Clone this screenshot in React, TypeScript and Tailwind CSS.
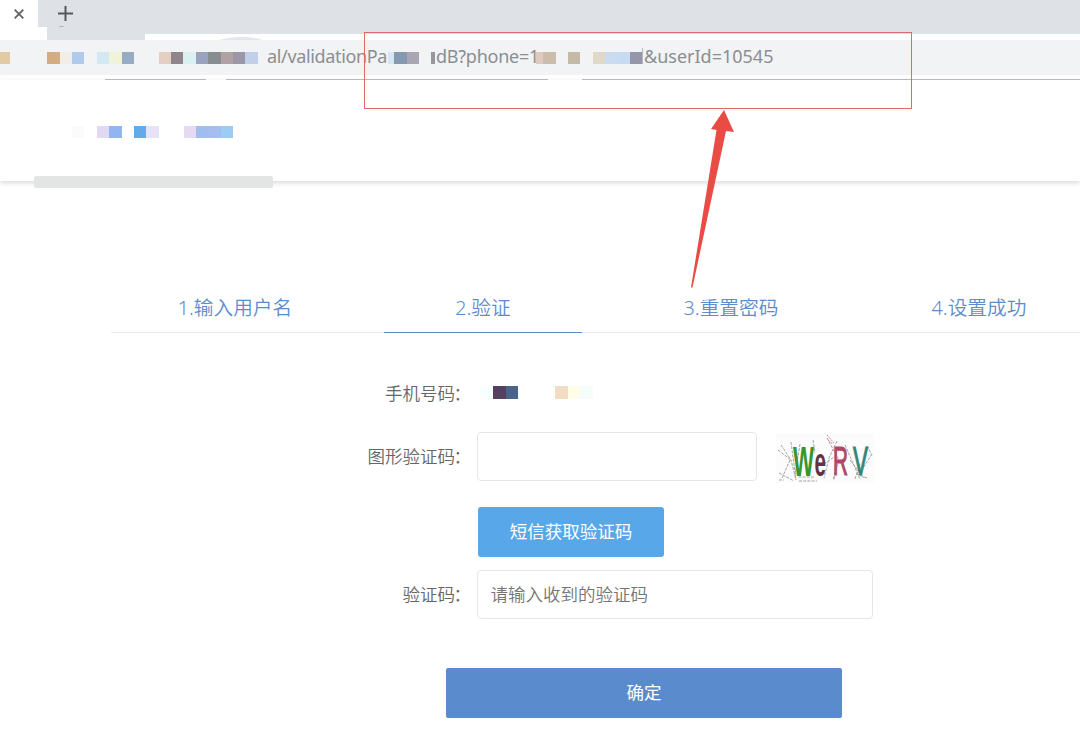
import React from "react";

type Cell = string | null;

function Mosaic({ cells }: { cells: Cell[] }) {
  return (
    <div className="flex h-[12.4px]">
      {cells.map((c, i) => (
        <span
          key={i}
          className="h-full w-[12.4px] shrink-0"
          style={{ backgroundColor: c ?? "transparent" }}
        />
      ))}
    </div>
  );
}

const addressCells: Cell[] = [
  "#e0cba6", null, null, null, "#d3ac82", "#f1ede8", "#b0cae9", null, "#d2e8f2", "#f0f2d9",
  "#98abc2", null, null, "#e4d0c2", "#90858a", "#daf0f1", "#99a3bd", "#878d91", "#b0a1a2",
  "#9c97a6", "#c1cfe9",
];

const brandCells: Cell[] = [
  "#fbfbfb", null, "#e1d8f2", "#92b5ef", null, "#62aae8", "#e7e3f7", null, null,
  "#e6daf2", "#a0bdee", "#a6bdf0", "#9ccbf5",
];

const steps = ["1.输入用户名", "2.验证", "3.重置密码", "4.设置成功"];

function TabStrip() {
  return (
    <div className="flex h-[34px] bg-[#dee1e6]">
      <div className="flex w-[38px] shrink-0 justify-center bg-white pt-[9px]">
        <svg width="10" height="10" viewBox="0 0 10 10" className="block">
          <path d="M.7.7 9.3 9.3M9.3.7.7 9.3" stroke="#626469" strokeWidth="1.9" />
        </svg>
      </div>
      <div className="flex h-full w-[9px] flex-col justify-end">
        <div className="h-[7px] bg-white" />
      </div>
      <div className="pt-[6px] pl-[11px]">
        <svg width="16" height="22" viewBox="0 0 16 22" className="block">
          <path d="M7.500 0v15M0 7.500h15" stroke="#55585d" strokeWidth="2" />
          <path d="M1.500 20.500h4" stroke="#aeb0b4" strokeWidth="1" />
        </svg>
      </div>
    </div>
  );
}

function AddressBar() {
  return (
    <div className="flex h-[46px] flex-col bg-white">
      <div className="flex h-[6px] shrink-0 pl-[47px]">
        <div className="h-full w-[98px] bg-[#dee1e6]" />
        <svg width="44" height="3" viewBox="0 0 44 3" className="mt-[3px] ml-[74px] block">
          <path d="M0 3Q22-3 44 3Z" fill="#e2e5e9" />
        </svg>
      </div>
      <div className="flex h-[35px] shrink-0 bg-[#f1f3f4] font-['Noto_Sans','Noto_Sans_CJK_SC',sans-serif] text-[18px] leading-[33px] whitespace-nowrap text-[#8b8e92]">
        <div className="-ml-[2.4px] w-[269.4px] shrink-0 pt-[12px]">
          <Mosaic cells={addressCells} />
        </div>
        <div className="w-[121px] shrink-0 tracking-[-0.35px]">al/validationPa</div>
        <div className="mt-[12px] h-[12px] w-[6.4px] shrink-0 bg-[#d6e6f2]" />
        <div className="w-[36.6px] shrink-0 pt-[12px]">
          <Mosaic cells={["#8799b0", "#aaa5b3"]} />
        </div>
        <div className="mt-[12px] h-[12px] w-[4px] shrink-0 bg-[#96989d]" />
        <div className="w-[101px] shrink-0 pl-px tracking-[-0.25px]">dB?phone=1</div>
        <div className="mt-[12px] h-[12.4px] w-[7.2px] shrink-0 bg-[#decabe]" />
        <div className="w-[98.8px] shrink-0 pt-[12px]">
          <Mosaic cells={["#cbbcab", null, "#c5baa8", null, "#e1d9c8", "#cbdcf1", "#c7dcf3", "#9696aa"]} />
        </div>
        <div className="mt-[8px] mr-px h-[16px] w-px shrink-0 bg-[#b4bac5]" />
        <div className="shrink-0">&amp;userId=10545</div>
      </div>
      <div className="flex h-[5px] shrink-0 items-end pl-[105px]">
        <div className="h-[1.5px] w-[101px] bg-[#b9b9bb]" />
        <div className="ml-[20px] h-[1.5px] w-[322px] bg-[#b9b9bb]" />
        <div className="ml-[34px] h-[1.5px] flex-1 bg-[#b9b9bb]" />
      </div>
    </div>
  );
}

function SiteHeader() {
  return (
    <div className="h-[101px] bg-white pt-[46px] pl-[72px] shadow-[0_2px_5px_rgba(0,0,0,0.15)]">
      <Mosaic cells={brandCells} />
      <div className="mt-[37.6px] -ml-[38px] h-[12px] w-[239px] rounded-[2px] bg-[#e3e4e4]" />
    </div>
  );
}

function Captcha() {
  return (
    <svg width="98" height="50" viewBox="0 0 98 50" className="mt-[3px] ml-[19px] block overflow-visible">
      <rect width="98" height="50" fill="#fcfcfc" />
      <g fill="none" stroke="#a5a5a5" strokeWidth="1" strokeDasharray="3 1.2">
        <path d="M2 17 15 27M5 12l10 15 5 20M15 9l5 38M14 27l-8 18M3 40l15 8M24 11l-5 31" />
        <path d="M37 7l2 13M38 44h-16M61 8l-8 17-5 20M51 5l12 22-6 20M69 12l15 34M91 45l-11-4M96 21l-9 14M79 46l5-15M91 13l5 9" />
        <path d="M61 14l-3 33M48 31l13-9M74 27l14 18M3 47h5M23 48h18" />
      </g>
      <path d="M51 2l7 8M52 7l5 4" stroke="#d48993" strokeWidth="1" strokeDasharray="2 1" />
      <g fontFamily="Liberation Sans" fontWeight="700">
        <text x="17" y="43" fontSize="42" textLength="21" lengthAdjust="spacingAndGlyphs" fill="#36952c">W</text>
        <text x="38.5" y="43" fontSize="41" textLength="11.5" lengthAdjust="spacingAndGlyphs" fill="#633244">e</text>
        <text x="57" y="42" fontSize="41" textLength="15" lengthAdjust="spacingAndGlyphs" fill="#ad4967" fontWeight="400" stroke="#ad4967" strokeWidth="1.2">R</text>
        <text x="77" y="42" fontSize="41" textLength="15" lengthAdjust="spacingAndGlyphs" fill="#338575" fontWeight="400" stroke="#338575" strokeWidth="1.2">V</text>
      </g>
    </svg>
  );
}

function Label({ children }: { children: string }) {
  return (
    <label className="w-[477px] shrink-0 pr-[6px] text-right text-[#666]">
      {children}
      <span className="-ml-[1.5px]">：</span>
    </label>
  );
}

export default function App() {
  return (
    <div className="relative h-[729px] w-[1080px] overflow-hidden bg-white font-['Noto_Sans_CJK_SC',sans-serif] text-[17.5px]">
      <TabStrip />
      <AddressBar />
      <SiteHeader />

      <nav className="mt-[101px] ml-[111px] flex h-[51px] w-[992px] border-b border-[#eaeaea] font-['Noto_Sans','Noto_Sans_CJK_SC',sans-serif] text-[19.7px] font-[350] text-[#5d8bcd]">
        {steps.map((step, i) => (
          <div key={step} className="flex w-[248px] justify-center">
            <div
              className={
                i === 1
                  ? "h-[51px] w-[198px] border-b border-[#6288ca] text-center leading-[52px]"
                  : "h-[51px] w-[198px] text-center leading-[52px]"
              }
            >
              {step}
            </div>
          </div>
        ))}
      </nav>

      <form className="font-[350]">
        <div className="mt-[35px] flex h-[50px] items-center">
          <Label>手机号码</Label>
          <div className="ml-[4px] pb-px">
            <Mosaic cells={["#f8ffff", "#54405f", "#49638a", null, null, null, "#f3dcc4", "#fffde9", "#f5fdfb"]} />
          </div>
        </div>
        <div className="mt-[13px] flex h-[50px] items-center">
          <Label>图形验证码</Label>
          <input className="h-[49px] w-[280px] shrink-0 rounded-[4px] border border-[#e6e6e6] px-3 outline-none" />
          <Captcha />
        </div>
        <button type="button" className="mt-[26px] ml-[478px] block h-[50px] w-[186px] rounded-[3px] bg-[#58a8e9] pb-px font-normal text-white">
          短信获取验证码
        </button>
        <div className="mt-[12px] flex h-[50px] items-center">
          <Label>验证码</Label>
          <input
            placeholder="请输入收到的验证码"
            className="h-[49px] w-[396px] rounded-[4px] border border-[#e6e6e6] px-[12.5px] pb-[2px] outline-none placeholder:text-[#757575]"
          />
        </div>
        <button type="button" className="mt-[49px] ml-[446px] block h-[50px] w-[396px] rounded-[2px] bg-[#5a8ccd] pb-px font-normal text-white">
          确定
        </button>
      </form>

      <div className="pointer-events-none absolute top-[32px] left-[364px] h-[77px] w-[548px] border border-[#dc6b6b]" />
      <svg width="60" height="180" viewBox="0 0 60 180" className="pointer-events-none absolute top-[109px] left-[682px]">
        <path d="M42 1 29 20l5.500 1L9 178.500h1.500L44 22l8 1Z" fill="#e94b45" />
      </svg>
    </div>
  );
}
